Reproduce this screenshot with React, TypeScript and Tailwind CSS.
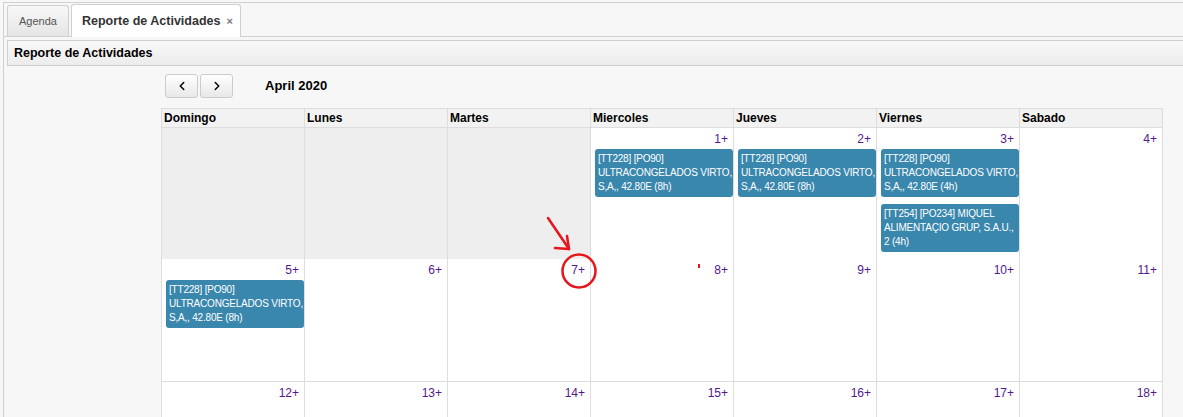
import { ChevronLeft, ChevronRight } from 'lucide-react';

type CalEvent = {
  lines: string[];
};

type Day = {
  num?: number;
  other?: boolean;
  events?: CalEvent[];
};

const virto = (hours: string): CalEvent => ({
  lines: ['[TT228] [PO90]', 'ULTRACONGELADOS VIRTO,', `S,A,, 42.80E (${hours})`],
});

const weekdays = ['Domingo', 'Lunes', 'Martes', 'Miercoles', 'Jueves', 'Viernes', 'Sabado'];

const weeks: { height: string; days: Day[] }[] = [
  {
    height: 'h-[131px]',
    days: [
      { other: true },
      { other: true },
      { other: true },
      { num: 1, events: [virto('8h')] },
      { num: 2, events: [virto('8h')] },
      {
        num: 3,
        events: [
          virto('4h'),
          { lines: ['[TT254] [PO234] MIQUEL', 'ALIMENTAÇIO GRUP, S.A.U.,', '2 (4h)'] },
        ],
      },
      { num: 4 },
    ],
  },
  {
    height: 'h-[123px]',
    days: [
      { num: 5, events: [virto('8h')] },
      { num: 6 },
      { num: 7 },
      { num: 8 },
      { num: 9 },
      { num: 10 },
      { num: 11 },
    ],
  },
  {
    height: 'h-[123px]',
    days: [{ num: 12 }, { num: 13 }, { num: 14 }, { num: 15 }, { num: 16 }, { num: 17 }, { num: 18 }],
  },
];

function EventBox({ ev }: { ev: CalEvent }) {
  return (
    <div className="ml-[4px] mb-[7px] rounded-[3px] bg-[#3a87ad] px-[3px] pt-[3px] pb-[3px] text-[10px] tracking-[-0.2px] leading-[14px] text-white whitespace-nowrap overflow-hidden">
      {ev.lines.map((l, i) => (
        <div key={i}>{l}</div>
      ))}
    </div>
  );
}

function DayCell({ day }: { day: Day }) {
  return (
    <div className={`border-r border-b border-[#dddddd] ${day.other ? 'bg-[#eeeeee]' : 'bg-white'}`}>
      {day.num !== undefined && (
        <div className="pt-[4px] pr-[5px] text-right text-[12px] leading-[14px] text-[#52188c]">
          {day.num}+
        </div>
      )}
      <div className="mt-[3px]">
        {day.events?.map((ev, i) => (
          <EventBox key={i} ev={ev} />
        ))}
      </div>
    </div>
  );
}

export default function App() {
  return (
    <div
      className="relative w-[1183px] h-[417px] overflow-hidden bg-[#f7f7f7] pt-[2px] pl-[3px] text-black"
      style={{ fontFamily: 'Tahoma, "Liberation Sans", Arial, sans-serif' }}
    >
      <div className="h-full border-t border-l border-[#d0d0d0]">
        {/* tabs */}
        <div className="flex items-end h-[34px] border-b border-[#d0d0d0] pl-[3px] gap-[2px]">
          <div className="w-[62px] h-[31px] flex items-center justify-center rounded-t-[3px] border border-b-0 border-[#d0d0d0] bg-gradient-to-b from-[#f7f7f7] to-[#e6e6e6] text-[11px] text-[#555]">
            Agenda
          </div>
          <div className="h-[33px] -mb-px pl-[10px] pr-[7px] flex items-center gap-[6px] rounded-t-[3px] border border-b-0 border-[#d0d0d0] bg-white text-[12.5px] font-bold text-[#333]">
            Reporte de Actividades
            <span className="text-[11px] text-[#777]">×</span>
          </div>
        </div>

        {/* panel header */}
        <div className="mt-[3px] ml-[3px] h-[26px] flex items-center border-t border-b border-l border-[#d0d0d0] bg-gradient-to-b from-[#f8f8f8] to-[#ececec] pl-[6px] text-[12.5px] font-bold">
          Reporte de Actividades
        </div>

        {/* calendar */}
        <div className="ml-[157px] w-[1002px]">
          <div className="mt-[7px] flex items-center h-[25px]">
            <button className="ml-[4px] w-[33px] h-[24px] flex items-center justify-center rounded-[3px] border border-[#cccccc] bg-gradient-to-b from-white to-[#e8e8e8]">
              <ChevronLeft className="w-[14px] h-[14px]" strokeWidth={2.5} />
            </button>
            <button className="ml-[2px] w-[33px] h-[24px] flex items-center justify-center rounded-[3px] border border-[#cccccc] bg-gradient-to-b from-white to-[#e8e8e8]">
              <ChevronRight className="w-[14px] h-[14px]" strokeWidth={2.5} />
            </button>
            <div className="ml-[32px] text-[13px] font-bold">April 2020</div>
          </div>

          <div className="mt-[10px] border-t border-l border-[#dddddd]">
            <div className="grid grid-cols-[repeat(7,143px)] bg-[#f2f2f2]">
              {weekdays.map((d) => (
                <div
                  key={d}
                  className="h-[19px] border-r border-b border-[#dddddd] pl-[2px] text-[12px] font-bold leading-[18px]"
                >
                  {d}
                </div>
              ))}
            </div>
            {weeks.map((w, i) => (
              <div key={i} className={`grid grid-cols-[repeat(7,143px)] ${w.height}`}>
                {w.days.map((d, j) => (
                  <DayCell key={j} day={d} />
                ))}
              </div>
            ))}
          </div>
        </div>
      </div>

      {/* red annotation */}
      <svg className="absolute left-0 top-0 pointer-events-none" width="1183" height="417">
        <g stroke="#e8141c" strokeWidth="2.5" fill="none" strokeLinecap="round">
          <line x1="548" y1="218" x2="569" y2="249" />
          <line x1="569" y1="249" x2="567" y2="236" />
          <line x1="569" y1="249" x2="555" y2="248" />
          <circle cx="579" cy="271" r="16.5" />
        </g>
        <rect x="698" y="264" width="2" height="4" fill="#e8141c" />
      </svg>
    </div>
  );
}
